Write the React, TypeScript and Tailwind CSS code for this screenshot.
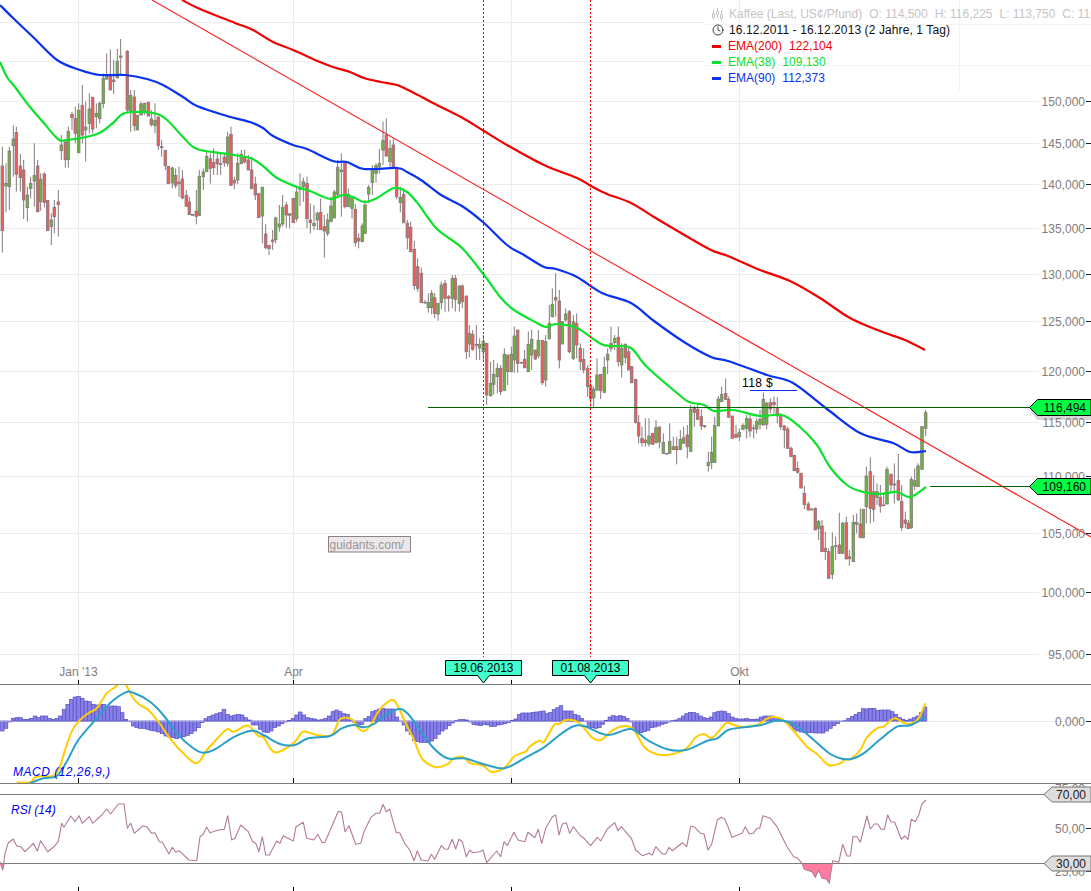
import React from 'react';
import { Clock } from 'lucide-react';

type Pt = number[];

// all traced values are in 3x crop coordinates, ox/oy move them back to page pixels
const toPage = (rows: Pt[], ox: number, oy: number) =>
  rows.map(([x, y]) => `${(ox + x / 3).toFixed(1)},${(oy + y / 3).toFixed(1)}`).join(' ');

// catmull-rom through the traced points, the indicator lines are smooth in the chart
const smooth = (points: string) => {
  const p = points.split(' ').map((s) => s.split(',').map(Number));
  let d = `M${p[0][0]} ${p[0][1]}`;
  for (let i = 0; i < p.length - 1; i++) {
    const a = p[Math.max(i - 1, 0)];
    const b = p[i];
    const c = p[i + 1];
    const e = p[Math.min(i + 2, p.length - 1)];
    const c1x = b[0] + (c[0] - a[0]) / 6;
    const c1y = b[1] + (c[1] - a[1]) / 6;
    const c2x = c[0] - (e[0] - b[0]) / 6;
    const c2y = c[1] - (e[1] - b[1]) / 6;
    d += `C${c1x.toFixed(1)} ${c1y.toFixed(1)} ${c2x.toFixed(1)} ${c2y.toFixed(1)} ${c[0]} ${c[1]}`;
  }
  return d;
};

const candleRowsA: Pt[] = [
  [7,440,498,692,758,0],[18,490,550,558,637,1],[28,440,453,560,630,1],[40,376,417,437,530,1],[49,380,397,523,575,0],[61,462,498,533,575,0],
  [71,480,510,600,657,0],[82,560,585,623,665,1],[92,530,550,565,595,1],[103,430,527,543,620,1],[113,480,498,635,637,0],[122,520,538,605,632,1],
  [133,517,522,607,622,0],[143,600,601,692,692,0],[154,640,660,680,735,1],[163,600,622,650,700,0],[175,570,606,614,710,0],[184,405,435,452,480,1],
  [196,420,426,479,503,0],[205,380,394,479,503,1],[216,335,343,353,390,0],[226,320,355,400,430,0],[236,310,331,458,458,1],[247,255,316,405,430,0],
  [257,305,381,390,485,1],[268,280,327,370,400,1],[278,290,292,387,400,0],[289,310,340,350,385,1],[299,305,310,356,370,1],[310,220,235,311,325,1],
  [320,160,225,237,240,1],[331,148,223,270,270,0],[341,180,240,245,282,0],[352,147,184,233,236,1],[362,117,168,172,225,1],[382,150,154,330,340,0],
  [392,270,286,332,395,1],[403,270,291,377,393,0],[412,345,346,390,390,1],[423,305,312,345,345,1],[433,308,310,335,345,1],[445,305,307,348,348,0],
  [454,330,357,374,380,0],[465,310,361,377,400,1],[475,350,351,437,450,0],[485,420,440,443,470,0],[496,450,451,497,510,0],[505,498,499,551,551,0],
  [517,500,504,549,565,1],[527,505,526,557,565,0],[537,500,546,551,590,0],[547,510,537,594,598,0],[559,570,586,619,620,0],[568,590,606,644,645,0],
  [578,643,643,646,646,0],[589,570,634,649,673,0],[598,510,529,646,647,1],[610,505,516,530,570,1],[620,455,469,515,515,1],[631,460,476,505,551,0],
  [641,445,487,503,525,0],[652,460,477,492,525,0],[662,460,491,492,525,0],[673,460,471,488,500,0],[683,395,411,490,500,1],[693,380,403,556,558,0],
  [703,530,541,549,568,0],[713,460,490,540,552,1],[724,450,463,491,491,1],[734,450,473,486,490,0],[745,465,480,510,510,0],[755,470,510,566,566,0],
  [766,530,552,585,600,0],[776,580,581,653,653,0],[787,560,562,648,730,1],[797,673,702,743,748,0],[807,735,736,746,765,0],[818,690,720,725,750,0],
  [827,650,654,719,730,1],[838,615,672,681,695,1],[848,585,622,672,680,1],[859,605,615,645,683,0],[869,640,641,646,685,1],[880,594,595,668,668,0],
  [890,562,576,656,665,1],[900,520,562,568,618,1],[910,533,545,560,605,1],[921,530,550,656,685,0],[931,610,660,668,700,0],[942,615,670,677,690,1],
  [952,635,640,660,690,1],[962,595,637,689,690,0],[973,645,680,693,773,0],[983,640,660,701,708,1],[993,590,618,665,665,1],[1003,570,576,654,654,1],
  [1013,480,502,584,590,1],[1024,460,510,515,650,1],[1035,485,487,620,625,0],[1045,565,583,620,620,1],[1056,590,593,625,655,1],[1066,612,628,728,740,0],
  [1076,700,715,723,745,0],[1087,670,678,725,725,1],
];

const candleRowsB: Pt[] = [
  [3,600,615,700,700,1],[14,555,562,582,610,1],[25,495,513,548,585,1],[36,490,497,520,548,1],[46,447,490,500,520,1],[57,365,422,450,495,1],
  [67,355,405,468,470,0],[78,420,445,485,505,1],[88,415,435,500,500,0],[98,500,503,590,598,0],[109,560,592,608,637,1],[119,565,583,668,670,0],
  [130,660,670,713,748,0],[140,665,682,755,757,0],[151,723,748,857,870,0],[161,775,800,865,875,0],
];

const candleRowsC: Pt[] = [
  [172,-37,-20,68,68,0],[183,60,67,69,70,1],[193,40,67,83,98,1],[203,30,40,83,103,1],[212,40,53,100,115,0],[222,70,70,102,122,1],
  [232,5,15,68,88,1],[243,0,10,55,95,0],[254,45,50,55,95,0],[265,-15,-5,55,85,1],[274,-15,-5,58,95,0],[286,15,18,70,95,1],
  [295,13,18,65,85,0],[307,48,48,215,237,0],[316,135,160,192,232,1],[326,150,163,208,212,0],[337,135,193,196,240,0],[347,175,193,204,240,1],
  [358,165,185,215,240,1],[368,190,190,345,375,0],[380,245,310,347,350,1],[389,240,283,313,343,1],[400,250,265,290,340,1],[410,255,265,335,345,0],
  [421,205,223,331,333,1],[431,225,225,275,315,0],[442,200,223,275,277,1],[451,140,168,240,278,1],[461,150,150,250,278,0],[472,245,247,248,250,0],
  [482,210,238,263,265,0],[493,155,193,275,275,1],[503,150,178,225,270,1],[514,210,210,237,240,0],[523,150,181,228,235,1],[535,180,181,308,315,0],
  [545,165,185,300,320,1],[556,75,130,175,180,1],[565,25,73,110,112,1],[575,-20,52,60,110,0],[586,30,63,240,265,0],[595,125,125,192,192,1],
  [605,85,102,120,125,1],[616,90,95,215,220,0],[628,105,125,235,240,1],[638,100,130,195,235,0],[649,190,205,244,270,0],[659,205,238,270,280,0],
  [671,255,265,320,350,0],[680,295,317,357,380,0],[689,320,328,353,385,1],[699,235,285,330,332,1],[710,282,283,332,357,0],[721,230,262,337,338,1],
  [731,205,223,240,283,1],[741,140,190,205,215,0],[752,165,175,188,210,1],[763,140,172,245,260,0],[773,190,205,255,293,1],[784,190,193,233,250,0],
  [794,200,215,270,270,0],[803,258,260,308,310,0],[815,298,298,428,430,0],[824,405,428,468,490,0],[834,440,475,488,500,0],[844,415,480,488,500,0],
  [855,415,468,492,500,1],[866,460,460,493,495,0],[876,420,443,488,490,1],[886,440,441,486,505,0],[898,460,487,520,522,1],[908,520,520,521,521,1],
  [917,430,484,520,522,1],[928,470,500,509,510,1],[938,470,500,509,553,0],[949,450,478,508,510,1],[959,440,473,490,490,1],[970,435,465,500,535,0],
  [980,375,388,514,515,1],[991,378,385,397,440,0],[1001,375,388,418,420,0],[1012,388,410,438,450,0],[1022,435,437,438,445,0],[1033,515,547,557,575,1],
  [1043,470,517,547,567,1],[1052,410,437,547,548,1],[1063,348,357,438,438,1],[1073,320,343,365,365,1],[1085,295,340,358,360,0],
];

const candleRowsD: Pt[] = [
  [86,110,118,172,172,0],[97,168,168,235,235,0],[108,195,223,232,235,0],[118,205,217,230,243,1],[129,190,196,208,210,1],[140,165,175,205,235,1],
  [150,165,177,213,232,0],[161,195,204,206,235,0],[170,175,185,207,220,1],[180,150,178,193,208,1],[190,97,118,195,197,1],[200,125,130,193,208,1],
  [211,115,128,147,160,0],[222,110,127,134,160,0],[232,112,143,168,190,0],[242,160,170,200,210,0],[253,195,198,210,265,0],[263,200,207,265,267,0],
  [273,260,265,290,290,0],[283,285,286,332,332,0],[293,305,325,337,340,0],[303,338,340,384,385,0],[313,378,400,434,448,0],[325,425,432,450,452,0],
  [335,445,447,450,450,0],[346,442,445,510,510,0],[356,480,484,505,540,1],[366,480,498,575,575,0],[376,515,565,575,600,0],[386,565,575,655,655,0],
  [397,517,560,643,658,1],[407,530,557,560,600,1],[418,458,555,580,582,0],[428,485,490,580,582,1],[439,470,488,597,597,0],[448,570,590,596,617,0],
  [460,465,487,605,605,1],[470,460,487,493,520,1],[481,445,492,532,535,0],[490,448,448,533,535,1],[499,320,348,440,490,1],[511,292,335,445,490,0],
  [521,345,395,448,485,0],[531,370,395,412,435,1],[541,375,412,438,458,0],[551,400,435,437,437,0],[561,320,328,432,433,1],[573,340,343,375,400,0],
  [583,310,372,375,430,0],[595,282,362,420,422,0],[605,375,424,503,512,0],[616,455,480,490,505,0],[625,480,490,506,506,0],[634,350,358,503,507,1],
  [644,325,362,378,390,1],[654,310,318,380,380,1],[666,198,200,328,328,1],[677,150,158,205,228,1],
];

const candles = [
  ...candleRowsA.map((r) => ({ r, ox: 0, oy: 0 })),
  ...candleRowsB.map((r) => ({ r, ox: 364, oy: 0 })),
  ...candleRowsC.map((r) => ({ r, ox: 364, oy: 280 })),
  ...candleRowsD.map((r) => ({ r, ox: 700, oy: 360 })),
].map(({ r, ox, oy }) => ({
  x: ox + r[0] / 3,
  hi: oy + r[1] / 3,
  top: oy + r[2] / 3,
  bot: oy + r[3] / 3,
  lo: oy + r[4] / 3,
  up: r[5] === 1,
}));

const ema200 = '182,0 200,9 235,23 253,30 273,42 293,50 320,62 333,67 350,72 364,78 381,82 397,85 414,93 437,105 461,117 484,131 507,145 544,165 577,178 591,186 607,194 631,203 654,217 681,233 711,250 728,256 760,270 790,281 820,298 850,318 880,331 905,340 925,350';
const ema90 = '0,5 13,18 33,37 57,60 80,70 100,75 125,75 147,79 163,85 183,97 197,106 227,116 250,122 263,128 273,136 293,145 307,149 333,161 347,162 364,169 397,168 407,172 421,180 441,195 462,206 484,223 507,245 524,255 544,267 556,269 577,277 602,293 631,303 654,321 684,342 711,357 728,361 767,375 793,383 827,409 860,433 893,443 910,452 926,451';
const ema38 = '0,62 7,77 15,87 30,107 43,122 58,139 67,140 97,134 113,123 125,113 153,113 167,120 183,137 197,149 227,154 250,158 263,166 277,178 297,187 310,191 330,199 343,195 353,197 364,202 377,198 394,188 407,192 419,205 437,229 462,248 484,275 501,298 514,310 537,323 546,327 556,324 577,328 601,344 614,346 631,348 647,367 677,393 689,402 704,405 714,411 733,410 760,416 782,415 800,427 817,445 830,467 847,485 863,492 880,494 897,492 910,497 926,487';

const histA = [-30,-22,-3,8,10,10,5,5,8,15,10,15,15,8,5,8,15,35,50,65,72,74,68,60,58,50,48,50,50,42,45,45,43,25,5,-2,-15,-20,-22,-22,-25,-28,-30,-33,-38,-45,-48,-50,-53,-50,-47,-43,-38,-30,-20,-5,7,14,18,22,25,35,20,15,18,20,18,10,3,-12,-12,-25,-33,-35,-30,-20,-15,-8,-3,2,8,18,27,18,10,8,6,3,4,8,15,28,33,28,22,20,5,-5,-10,-10];
const histB = [8,14,28,32,36,38,36,36,36,12,-2,-12,-30,-40,-58,-62,-64,-64,-64,-60,-52,-40,-30,-24,-14,-6,1,4,5,3,-3,-10,-12,-14,-10,-12,-16,-16,-12,-10,-8,-5,2,6,20,24,24,24,26,27,28,30,22,26,34,40,46,30,30,30,20,16,8,-2,-16,-20,-22,-20,-10,2,12,16,14,16,14,8,-3,-25,-33,-35,-32,-28,-20,-18,-15,-10,-7,-3,1,3,8,15,22,26,26,22,15,10,8,12,25,28,30,28];
const histC = [22,12,8,6,6,8,5,5,6,12,15,15,15,10,6,2,-5,-15,-25,-30,-33,-35,-35,-35,-36,-36,-36,-30,-22,-14,-8,-2,1,8,14,20,26,37,36,38,38,32,33,33,33,28,20,10,5,2,6,10,15,25,42];

// each traced run is stretched over the x range of its crop
const spread = (vals: number[], from: number, to: number) => {
  const step = (to - from) / (vals.length - 1);
  return vals.map((h, i) => ({ x: from + i * step, h: h / 3, w: step }));
};

const histBars = [...spread(histA, 2.3, 362), ...spread(histB, 365.5, 725), ...spread(histC, 728.5, 925)];

const macdYellow = [
  toPage([[50,397],[90,397],[105,382],[125,378],[160,378],[180,350],[195,300],[215,245],[235,215],[265,190],[290,175],[320,130],[345,112],[360,98],[375,100],[400,145],[420,165],[445,180],[475,215],[510,265],[550,310],[590,340],[620,300],[650,268],[680,238],[700,245],[735,228],[750,230],[775,258],[790,262],[820,305],[850,300],[885,275],[910,245],[950,255],[995,255],[1020,208],[1055,208],[1075,235],[1092,243]], 0, 650),
  toPage([[20,225],[40,190],[60,165],[85,150],[100,165],[125,220],[150,270],[170,320],[190,340],[220,352],[255,340],[265,328],[295,320],[320,340],[355,345],[380,365],[410,360],[430,345],[452,318],[485,305],[495,292],[525,272],[540,275],[570,225],[585,222],[605,210],[640,215],[665,240],[685,263],[710,270],[750,238],[785,228],[810,240],[840,290],[870,310],[910,315],[965,297],[995,262],[1020,252],[1045,263],[1080,225],[1092,218]], 364, 650),
  toPage([[40,230],[90,225],[125,203],[155,203],[175,215],[210,255],[240,290],[270,312],[305,345],[340,340],[355,328],[370,328],[400,300],[420,262],[450,235],[470,230],[490,212],[505,205],[530,218],[550,222],[575,205],[595,160]], 727, 650),
].join(' ');

const macdTeal = [
  toPage([[90,400],[130,385],[170,378],[200,335],[235,270],[290,205],[330,160],[375,128],[400,128],[450,155],[490,195],[530,250],[580,295],[610,308],[650,295],[700,262],[755,242],[790,255],[840,282],[885,285],[925,265],[990,258],[1025,235],[1060,225],[1092,232]], 0, 650),
  toPage([[30,222],[65,195],[105,177],[130,190],[165,235],[205,290],[250,325],[300,325],[350,340],[410,355],[440,348],[490,320],[540,292],[580,260],[625,230],[660,228],[730,255],[800,237],[850,270],[910,298],[965,300],[1030,272],[1060,265],[1092,240]], 364, 650),
  toPage([[50,232],[100,226],[140,213],[170,212],[210,228],[260,270],[310,312],[345,326],[375,326],[410,310],[460,268],[510,230],[550,226],[595,202]], 727, 650),
].join(' ');

const rsiLine = [
  toPage([[0,635],[8,660],[15,610],[25,578],[40,567],[50,588],[62,590],[75,605],[100,580],[112,603],[122,572],[143,605],[160,592],[175,575],[185,520],[192,532],[212,498],[225,515],[237,497],[247,520],[268,500],[278,520],[305,495],[320,477],[332,492],[355,462],[372,462],[382,535],[392,520],[403,550],[428,528],[440,530],[455,550],[465,548],[478,575],[487,577],[507,612],[517,592],[527,607],[537,602],[567,630],[590,632],[600,560],[610,552],[620,532],[630,548],[655,540],[673,538],[683,497],[695,570],[705,565],[722,525],[745,545],[758,575],[767,580],[777,605],[787,560],[797,615],[808,615],[830,573],[840,580],[850,557],[880,573],[888,530],[910,517],[920,565],[942,570],[953,553],[967,578],[975,577],[1015,484],[1025,487],[1035,545],[1047,527],[1067,583],[1082,580],[1092,545]], 0, 650),
  toPage([[20,503],[35,490],[47,490],[57,463],[67,485],[77,478],[97,548],[107,548],[122,580],[137,600],[150,632],[160,603],[172,630],[192,633],[202,613],[212,628],[232,587],[242,597],[252,598],[265,568],[275,597],[285,568],[295,575],[307,620],[317,600],[327,608],[347,605],[357,600],[368,638],[398,603],[410,620],[420,575],[430,587],[450,547],[462,570],[482,575],[492,547],[512,563],[523,538],[533,580],[545,535],[565,500],[575,495],[585,555],[595,522],[607,518],[617,550],[628,530],[650,558],[660,565],[680,587],[700,562],[710,573],[730,537],[752,518],[762,542],[772,530],[802,565],[815,600],[835,617],[855,610],[865,615],[875,590],[895,612],[905,612],[915,592],[925,602],[955,578],[968,590],[980,528],[990,530],[1010,550],[1020,552],[1032,600],[1043,582],[1060,510],[1072,502],[1082,507],[1092,530]], 364, 650),
  toPage([[15,562],[45,550],[55,530],[67,552],[78,550],[90,535],[98,535],[108,497],[130,505],[150,530],[160,550],[180,590],[200,620],[212,625],[225,640],[232,658],[255,665],[265,682],[275,660],[285,685],[298,687],[307,700],[317,632],[335,637],[347,583],[360,618],[370,618],[378,560],[390,560],[400,577],[420,498],[430,537],[442,522],[452,522],[462,538],[472,538],[482,495],[492,515],[503,517],[523,568],[533,558],[543,568],[553,508],[565,515],[575,495],[585,462],[597,450]], 727, 650),
].join(' ');

const rsiPink = toPage([[225,640],[232,658],[255,665],[265,682],[275,660],[285,685],[298,687],[307,700],[315,640]], 727, 650);

const priceAxis = [
  { y: 101, label: '150,000' }, { y: 143, label: '145,000' }, { y: 184, label: '140,000' }, { y: 228, label: '135,000' },
  { y: 274, label: '130,000' }, { y: 321, label: '125,000' }, { y: 371, label: '120,000' }, { y: 422, label: '115,000' },
  { y: 476, label: '110,000' }, { y: 533, label: '105,000' }, { y: 592, label: '100,000' }, { y: 654, label: '95,000' },
];

const months = [
  { x: 78.5, label: "Jan '13" },
  { x: 293.5, label: 'Apr' },
  { x: 511.5, label: '' },
  { x: 739.5, label: 'Okt' },
];

const GridV = ({ y1, y2 }: { y1: number; y2: number }) => (
  <>
    {months.map((m) => (
      <line key={m.x} x1={m.x} x2={m.x} y1={y1} y2={y2} stroke="#ececec" />
    ))}
  </>
);

const AxisLabel = ({ y, label }: { y: number; label: string }) => (
  <>
    <text x={1085} y={y + 4.5} textAnchor="end" className="fill-[#857b7d] text-[12px]">{label}</text>
    <line x1={1086} x2={1091} y1={y + 0.5} y2={y + 0.5} stroke="#222" />
  </>
);

const DateTag = ({ x, label }: { x: number; label: string }) => (
  <g>
    <path
      d={`M${x + 0.5} 660.5h76v15h-32l-6 7.5l-6 -7.5h-32z`}
      fill="#40ffcc"
      stroke="#000"
    />
    <text x={x + 38.5} y={672} textAnchor="middle" className="fill-black text-[12px]">{label}</text>
  </g>
);

const PriceTag = ({ y, label }: { y: number; label: string }) => (
  <g>
    <path d={`M1029.5 ${y}l8 -8h53.5v16h-53.5z`} fill="#00ff44" stroke="#000" />
    <text x={1086} y={y + 4.5} textAnchor="end" className="fill-black text-[12px]">{label}</text>
  </g>
);

const LimitTag = ({ y, label }: { y: number; label: string }) => (
  <g>
    <path d={`M1044 ${y}l8 -7.5h39v15h-39z`} fill="#dedcdc" stroke="#777" />
    <text x={1086} y={y + 4.5} textAnchor="end" className="fill-[#222] text-[12px]">{label}</text>
  </g>
);

const LegendRow = ({ color, name, value }: { color: string; name: string; value: string }) => (
  <div className={`flex h-4 items-center gap-[7px] ${color}`}>
    <span className="h-[3px] w-[9px] bg-current" />
    <span>{name}</span>
    <span>{value}</span>
  </div>
);

export default function App() {
  return (
    <div className="relative flex h-[891px] w-[1091px] flex-col overflow-hidden bg-white font-['Liberation_Sans',Arial,sans-serif]">
      {/* price pane */}
      <div className="relative h-[684px] shrink-0">
        <svg className="block" width="1091" height="684" viewBox="0 0 1091 684">
          {priceAxis.map((t) => (
            <line key={t.y} x1={0} x2={1039} y1={t.y + 0.5} y2={t.y + 0.5} stroke="#ececec" />
          ))}
          <line x1={0} x2={705} y1={22.5} y2={22.5} stroke="#ececec" />
          <line x1={0} x2={705} y1={61.5} y2={61.5} stroke="#ececec" />
          <line x1={705} x2={1091} y1={24.5} y2={24.5} stroke="#f3f3f3" />
          <line x1={705} x2={1091} y1={65.5} y2={65.5} stroke="#f3f3f3" />
          <line x1={959.5} x2={959.5} y1={0} y2={92} stroke="#f3f3f3" />
          <GridV y1={0} y2={684} />

          {candles.map((c, i) => (
            <g key={i}>
              <line x1={c.x} x2={c.x} y1={c.hi} y2={c.lo} stroke="#857a7c" strokeWidth="1" />
              <rect
                x={c.x - 1.3}
                y={c.top}
                width={2.6}
                height={Math.max(c.bot - c.top, 0.8)}
                fill={c.up ? '#68b53a' : '#ee5c5c'}
                stroke="#857a7c"
                strokeWidth="0.8"
              />
            </g>
          ))}

          <path d={smooth(ema200)} fill="none" stroke="#f00000" strokeWidth="2.2" />
          <path d={smooth(ema90)} fill="none" stroke="#0a32f0" strokeWidth="2.2" />
          <path d={smooth(ema38)} fill="none" stroke="#0ce22c" strokeWidth="2.2" />

          <line x1={152} y1={0} x2={1091} y2={537} stroke="#ff2020" strokeWidth="1.1" />
          <line x1={483.5} x2={483.5} y1={0} y2={657} stroke="#f00" strokeDasharray="2 2" />
          <line x1={590.5} x2={590.5} y1={0} y2={657} stroke="#f00" strokeDasharray="2 2" />

          <line x1={428} x2={1030} y1={407.5} y2={407.5} stroke="#006400" />
          <line x1={930} x2={1030} y1={486.5} y2={486.5} stroke="#006400" />
          <line x1={750} x2={797} y1={390.5} y2={390.5} stroke="#0a32f0" />
          <text x={742} y={387} className="fill-black text-[12px] tracking-[0.4px]">118 $</text>

          <path d="M1029 409 L1037 420 L1091 420 L1091 412 L1037 412 Z" fill="#d6d6d6" />

          {priceAxis.map((t) => (
            <AxisLabel key={t.y} y={t.y} label={t.label} />
          ))}

          {months.map((m) => (
            <g key={m.x}>
              <text x={m.x} y={676} textAnchor="middle" className="fill-[#857b7d] text-[12px]">{m.label}</text>
              <line x1={m.x} x2={m.x} y1={680} y2={684} stroke="#000" />
            </g>
          ))}

          <rect x={328.5} y={536.5} width={82} height={15.5} fill="#ebe8e9" stroke="#8c8285" />
          <text x={329.5} y={548.5} className="fill-[#9c9698] text-[12px]">guidants.com/</text>

          <DateTag x={445} label="19.06.2013" />
          <DateTag x={552} label="01.08.2013" />
          <PriceTag y={407.5} label="116,494" />
          <PriceTag y={486.5} label="109,160" />
        </svg>

        {/* legend */}
        <div className="absolute left-[712px] top-[6px] flex w-[379px] flex-col whitespace-nowrap text-[12px] leading-4">
          <div className="flex h-4 items-center gap-[7px] text-[#c6c4c4]">
            <svg className="mr-[-1px] shrink-0" width="11" height="12" viewBox="0 0 11 12" fill="none" stroke="currentColor">
              <path d="M1.5 1.5v10M5.5 0v10M9.5 2v10" />
              <path d="M0.5 5.5h2v4h-2zM4.5 3.5h2v3h-2zM8.5 6.5h2v4h-2z" fill="#fff" />
            </svg>
            <span>Kaffee (Last, US¢/Pfund)</span>
            <span>O: 114,500</span>
            <span>H: 116,225</span>
            <span>L: 113,750</span>
            <span>C: 116,000</span>
          </div>
          <div className="flex h-4 items-center gap-[5px] tracking-[0.1px] text-[#111]">
            <Clock size={12} strokeWidth={1.6} className="shrink-0" />
            <span>16.12.2011 - 16.12.2013 (2 Jahre, 1 Tag)</span>
          </div>
          <LegendRow color="text-[#f00000]" name="EMA(200)" value="122,104" />
          <LegendRow color="text-[#0ce22c]" name="EMA(38)" value="109,130" />
          <LegendRow color="text-[#0a32f0]" name="EMA(90)" value="112,373" />
        </div>
      </div>

      {/* MACD pane */}
      <div className="h-[100px] shrink-0">
        <svg className="block" width="1091" height="100" viewBox="0 684 1091 100">
          <GridV y1={684} y2={784} />
          <line x1={0} x2={1086} y1={721.5} y2={721.5} stroke="#ececec" />
          {histBars.map((b, i) => (
            <rect
              key={i}
              x={b.x - b.w / 2}
              y={b.h > 0 ? 721 - b.h : 721}
              width={b.w}
              height={Math.abs(b.h)}
              fill="#8680e8"
              stroke="#5a50c4"
              strokeWidth="0.7"
            />
          ))}
          <line x1={0} x2={926} y1={721.5} y2={721.5} stroke="#9c98dc" />
          <path d={smooth(macdYellow)} fill="none" stroke="#ffcc00" strokeWidth="2" />
          <path d={smooth(macdTeal)} fill="none" stroke="#2aa0c8" strokeWidth="2" />
          <line x1={0} x2={1091} y1={684.5} y2={684.5} stroke="#7c7c7c" />
          <line x1={0} x2={1091} y1={783.5} y2={783.5} stroke="#7c7c7c" />
          {months.map((m) => (
            <line key={m.x} x1={m.x} x2={m.x} y1={778} y2={783} stroke="#000" />
          ))}
          <AxisLabel y={721} label="0,000" />
          <text x={13} y={776} className="fill-[#0000ff] text-[12px] italic tracking-[0.5px]">MACD (12,26,9,)</text>
        </svg>
      </div>

      {/* RSI pane */}
      <div className="h-[107px] shrink-0">
        <svg className="block" width="1091" height="107" viewBox="0 784 1091 107">
          <AxisLabel y={788} label="75,00" />
          <AxisLabel y={828} label="50,00" />
          <AxisLabel y={871} label="25,00" />
          <line x1={0} x2={1044} y1={794.5} y2={794.5} stroke="#7c7c7c" />
          <polygon points={rsiPink} fill="#ff7ca0" />
          <polygon points="0,863.5 2.7,870 5,863.5" fill="#ff7ca0" />
          <line x1={0} x2={1044} y1={863.5} y2={863.5} stroke="#7c7c7c" />
          <polyline points={rsiLine} fill="none" stroke="#b27a98" strokeWidth="1.1" strokeLinejoin="round" />
          {months.map((m) => (
            <line key={m.x} x1={m.x} x2={m.x} y1={887} y2={891} stroke="#000" />
          ))}
          <text x={11} y={814} className="fill-[#0000ff] text-[12px] italic">RSI (14)</text>
          <LimitTag y={794.5} label="70,00" />
          <LimitTag y={863.5} label="30,00" />
        </svg>
      </div>
    </div>
  );
}
